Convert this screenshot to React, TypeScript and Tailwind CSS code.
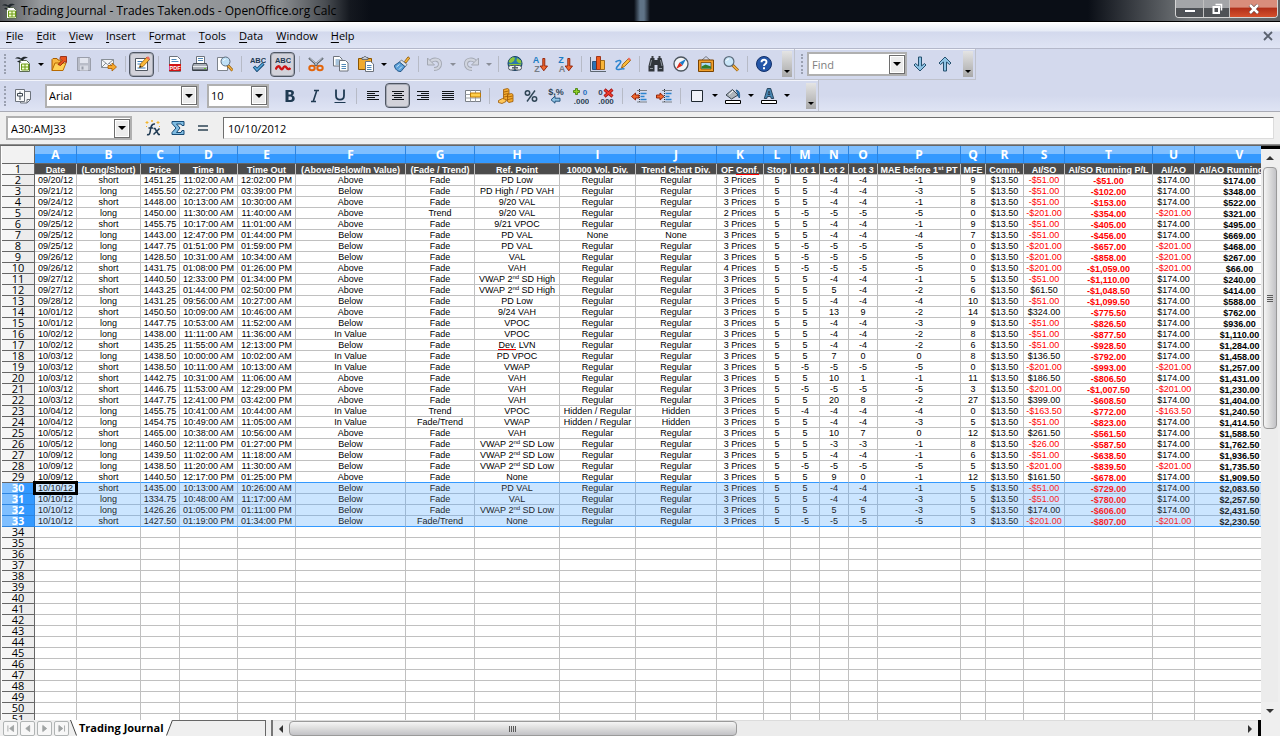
import type { ReactNode } from 'react'

type Column = {
    letter: string
    title: ReactNode
    width: number
}

const COLUMNS: Column[] = [
    { letter: 'A', title: 'Date', width: 42 },
    { letter: 'B', title: '(Long/Short)', width: 64 },
    { letter: 'C', title: 'Price', width: 39 },
    { letter: 'D', title: 'Time In', width: 58 },
    { letter: 'E', title: 'Time Out', width: 58 },
    { letter: 'F', title: '(Above/Below/In Value)', width: 110 },
    { letter: 'G', title: '(Fade / Trend)', width: 69 },
    { letter: 'H', title: 'Ref. Point', width: 85 },
    { letter: 'I', title: '10000 Vol. Div.', width: 76 },
    { letter: 'J', title: 'Trend Chart Div.', width: 81 },
    { letter: 'K', title: <>OF <Misspelt>Conf.</Misspelt></>, width: 47 },
    { letter: 'L', title: 'Stop', width: 27 },
    { letter: 'M', title: 'Lot 1', width: 29 },
    { letter: 'N', title: 'Lot 2', width: 29 },
    { letter: 'O', title: 'Lot 3', width: 29 },
    { letter: 'P', title: <>MAE before 1<sup className="text-[6px]">st</sup> PT</>, width: 83 },
    { letter: 'Q', title: 'MFE', width: 25 },
    { letter: 'R', title: 'Comm.', width: 38 },
    { letter: 'S', title: 'AI/SO', width: 41 },
    { letter: 'T', title: 'AI/SO Running P/L', width: 88 },
    { letter: 'U', title: 'AI/AO', width: 42 },
    { letter: 'V', title: 'AI/AO Running P/L', width: 90 },
]

const HEAD_WIDTH = 33
const TABLE_WIDTH = COLUMNS.reduce((sum, column) => sum + column.width, HEAD_WIDTH)
const LAST_ROW = 51

const TRADES = `
09/20/12|short|1451.25|11:02:00 AM|12:02:00 PM|Above|Fade|PD Low|Regular|Regular|3 Prices|5|5|-4|-4|-1|9|$13.50|-$51.00|-$51.00|$174.00|$174.00
09/21/12|long|1455.50|02:27:00 PM|03:39:00 PM|Below|Fade|PD High / PD VAH|Regular|Regular|3 Prices|5|5|-4|-4|-3|5|$13.50|-$51.00|-$102.00|$174.00|$348.00
09/24/12|short|1448.00|10:13:00 AM|10:30:00 AM|Above|Fade|9/20 VAL|Regular|Regular|3 Prices|5|5|-4|-4|-1|8|$13.50|-$51.00|-$153.00|$174.00|$522.00
09/24/12|long|1450.00|11:30:00 AM|11:40:00 AM|Above|Trend|9/20 VAL|Regular|Regular|2 Prices|5|-5|-5|-5|-5|0|$13.50|-$201.00|-$354.00|-$201.00|$321.00
09/25/12|short|1455.75|10:17:00 AM|11:01:00 AM|Above|Fade|9/21 VPOC|Regular|Regular|3 Prices|5|5|-4|-4|-1|9|$13.50|-$51.00|-$405.00|$174.00|$495.00
09/25/12|long|1443.00|12:47:00 PM|01:44:00 PM|Below|Fade|PD VAL|None|None|3 Prices|5|5|-4|-4|-4|7|$13.50|-$51.00|-$456.00|$174.00|$669.00
09/25/12|long|1447.75|01:51:00 PM|01:59:00 PM|Below|Fade|PD VAL|Regular|Regular|3 Prices|5|-5|-5|-5|-5|0|$13.50|-$201.00|-$657.00|-$201.00|$468.00
09/26/12|long|1428.50|10:31:00 AM|10:34:00 AM|Below|Fade|VAL|Regular|Regular|3 Prices|5|-5|-5|-5|-5|0|$13.50|-$201.00|-$858.00|-$201.00|$267.00
09/26/12|short|1431.75|01:08:00 PM|01:26:00 PM|Above|Fade|VAH|Regular|Regular|4 Prices|5|-5|-5|-5|-5|0|$13.50|-$201.00|-$1,059.00|-$201.00|$66.00
09/27/12|short|1440.50|12:33:00 PM|01:34:00 PM|Above|Fade|VWAP 2^nd^ SD High|Regular|Regular|3 Prices|5|5|-4|-4|-1|5|$13.50|-$51.00|-$1,110.00|$174.00|$240.00
09/27/12|short|1443.25|01:44:00 PM|02:50:00 PM|Above|Fade|VWAP 2^nd^ SD High|Regular|Regular|3 Prices|5|5|5|-4|-2|6|$13.50|$61.50|-$1,048.50|$174.00|$414.00
09/28/12|long|1431.25|09:56:00 AM|10:27:00 AM|Below|Fade|PD Low|Regular|Regular|3 Prices|5|5|-4|-4|-4|10|$13.50|-$51.00|-$1,099.50|$174.00|$588.00
10/01/12|short|1450.50|10:09:00 AM|10:46:00 AM|Above|Fade|9/24 VAH|Regular|Regular|3 Prices|5|5|13|9|-2|14|$13.50|$324.00|-$775.50|$174.00|$762.00
10/01/12|long|1447.75|10:53:00 AM|11:52:00 AM|Below|Fade|VPOC|Regular|Regular|3 Prices|5|5|-4|-4|-3|9|$13.50|-$51.00|-$826.50|$174.00|$936.00
10/02/12|long|1438.00|11:11:00 AM|11:36:00 AM|In Value|Fade|VPOC|Regular|Regular|3 Prices|5|5|-4|-4|-2|8|$13.50|-$51.00|-$877.50|$174.00|$1,110.00
10/02/12|short|1435.25|11:55:00 AM|12:13:00 PM|Below|Fade|~Dev.~ LVN|Regular|Regular|3 Prices|5|5|-4|-4|-2|6|$13.50|-$51.00|-$928.50|$174.00|$1,284.00
10/03/12|long|1438.50|10:00:00 AM|10:02:00 AM|In Value|Fade|PD VPOC|Regular|Regular|3 Prices|5|5|7|0|0|8|$13.50|$136.50|-$792.00|$174.00|$1,458.00
10/03/12|short|1438.50|10:11:00 AM|10:13:00 AM|In Value|Fade|VWAP|Regular|Regular|3 Prices|5|-5|-5|-5|-5|0|$13.50|-$201.00|-$993.00|-$201.00|$1,257.00
10/03/12|short|1442.75|10:31:00 AM|11:06:00 AM|Above|Fade|VAH|Regular|Regular|3 Prices|5|5|10|1|-1|11|$13.50|$186.50|-$806.50|$174.00|$1,431.00
10/03/12|short|1446.75|11:53:00 AM|12:29:00 PM|Above|Fade|VAH|Regular|Regular|3 Prices|5|-5|-5|-5|-5|3|$13.50|-$201.00|-$1,007.50|-$201.00|$1,230.00
10/03/12|short|1447.75|12:41:00 PM|03:42:00 PM|Above|Fade|VAH|Regular|Regular|3 Prices|5|5|20|8|-2|27|$13.50|$399.00|-$608.50|$174.00|$1,404.00
10/04/12|long|1455.75|10:41:00 AM|10:44:00 AM|In Value|Trend|VPOC|Hidden / Regular|Hidden|3 Prices|5|-4|-4|-4|-4|0|$13.50|-$163.50|-$772.00|-$163.50|$1,240.50
10/04/12|long|1454.75|10:49:00 AM|11:05:00 AM|In Value|Fade/Trend|VWAP|Hidden / Regular|Hidden|3 Prices|5|5|-4|-4|-3|5|$13.50|-$51.00|-$823.00|$174.00|$1,414.50
10/05/12|short|1465.00|10:38:00 AM|10:56:00 AM|Above|Fade|VAH|Regular|Regular|3 Prices|5|5|10|7|0|12|$13.50|$261.50|-$561.50|$174.00|$1,588.50
10/05/12|long|1460.50|12:11:00 PM|01:27:00 PM|Below|Fade|VWAP 2^nd^ SD Low|Regular|Regular|3 Prices|5|5|-3|-3|-1|8|$13.50|-$26.00|-$587.50|$174.00|$1,762.50
10/09/12|long|1439.50|11:02:00 AM|11:18:00 AM|Below|Fade|VWAP 2^nd^ SD Low|Regular|Regular|3 Prices|5|5|-4|-4|-1|6|$13.50|-$51.00|-$638.50|$174.00|$1,936.50
10/09/12|long|1438.50|11:20:00 AM|11:30:00 AM|Below|Fade|VWAP 2^nd^ SD Low|Regular|Regular|3 Prices|5|-5|-5|-5|-5|5|$13.50|-$201.00|-$839.50|-$201.00|$1,735.50
10/09/12|short|1440.50|12:17:00 PM|01:25:00 PM|Above|Fade|None|Regular|Regular|3 Prices|5|5|9|0|-1|12|$13.50|$161.50|-$678.00|$174.00|$1,909.50
10/10/12|short|1435.00|10:13:00 AM|10:26:00 AM|Below|Fade|PD VAL|Regular|Regular|3 Prices|5|5|-4|-4|-1|5|$13.50|-$51.00|-$729.00|$174.00|$2,083.50
10/10/12|long|1334.75|10:48:00 AM|11:17:00 AM|Below|Fade|VAL|Regular|Regular|3 Prices|5|5|-4|-4|-3|5|$13.50|-$51.00|-$780.00|$174.00|$2,257.50
10/10/12|long|1426.26|01:05:00 PM|01:11:00 PM|Below|Fade|VWAP 2^nd^ SD Low|Regular|Regular|3 Prices|5|5|5|5|-3|5|$13.50|$174.00|-$606.00|$174.00|$2,431.50
10/10/12|short|1427.50|01:19:00 PM|01:34:00 PM|Below|Fade/Trend|None|Regular|Regular|3 Prices|5|-5|-5|-5|-5|3|$13.50|-$201.00|-$807.00|-$201.00|$2,230.50
`
    .trim()
    .split('\n')
    .map((line) => line.split('|'))

function Misspelt({ children }: { children: ReactNode }) {
    return <span className="shadow-[inset_0_-1px_0_#ff0000]">{children}</span>
}

// ^x^ is superscript, ~x~ is flagged by the spell checker
const renderValue = (value: string): ReactNode => {
    if (value.includes('^')) {
        const [before, sup, after] = value.split('^')
        return <>{before}<sup className="text-[6px]">{sup}</sup>{after}</>
    }
    if (value.includes('~')) {
        const [, word, after] = value.split('~')
        return <><Misspelt>{word}</Misspelt>{after}</>
    }
    return value
}

/* ---------- icons ---------- */

function Svg({ children }: { children: ReactNode }) {
    return <svg viewBox="0 0 16 16" className="size-4 shrink-0" fill="none" aria-hidden="true">{children}</svg>
}

const CalcIcon = () => (
    <Svg>
        <path d="M4.5 4.5h7l3 3v8h-10z" fill="#fff" stroke="#5b6b52" />
        <path d="M0 2.5C2 .5 4.500 1 6 2.500 8 0 11 .5 13 2c-2.500-.3-4 .5-5.500 3C5.500 3 3 2.500 0 2.500z" fill="#20272c" />
        <path d="M2 5.500c1.500-1.200 3-1 4.500 1C5 6.500 3.500 6.500 2 5.500z" fill="#20272c" />
        <path d="M6.500 8h7v6h-7z" fill="#f3ffd0" stroke="#6c9a14" />
        <path d="M10 8v6M6.500 11h7" stroke="#6c9a14" />
    </Svg>
)

const OpenIcon = () => (
    <Svg>
        <path d="M1 14.5v-11l1-1h4l1 1.5h3v3" fill="#f8b840" stroke="#a85b00" />
        <path d="M1 14.5L4 7h11l-3 7.500z" fill="#ffd257" stroke="#b86a00" />
        <path d="M7 8.500l4-4-2-2L9.500.5h6v6l-2-1-4 4z" fill="#e8541e" stroke="#8e1c00" strokeWidth=".8" />
    </Svg>
)

const SaveIcon = () => (
    <Svg>
        <path d="M1.500 1.500h12l1 1v12h-13z" fill="#b9bdc8" stroke="#9a9eaa" />
        <path d="M4 2h8v5H4z" fill="#e2e5ee" />
        <path d="M4 9.500h8v5H4z" fill="#d8dbe4" />
        <path d="M5.500 10.500h2v3h-2z" fill="#9a9eaa" />
    </Svg>
)

const MailIcon = () => (
    <Svg>
        <path d="M.5 3.500h12v8H.5z" fill="#f5f6f8" stroke="#888f96" />
        <path d="M.5 3.500l6 5 6-5M.5 11.500L5 7M12.500 11.500L8 7" stroke="#888f96" />
        <path d="M7 9.500h4V7l4.500 4-4.500 4v-2.500H7z" fill="#f8a92c" stroke="#a85b00" strokeWidth=".8" />
    </Svg>
)

const EditIcon = () => (
    <Svg>
        <path d="M1.500 2.500h12v12h-12z" fill="#fff" stroke="#4f5660" />
        <path d="M3.500 5.500h5M3.500 8h3M3.500 12h8" stroke="#3b7ab5" />
        <path d="M5.500 11.500l1-3.500L13 1l2.500 2.500-6.500 7z" fill="#fbb838" stroke="#8c5600" strokeWidth=".8" />
        <path d="M12 2l2-1.800 2 2L14.500 4z" fill="#ec6a5c" />
        <path d="M5.500 11.500l.6-2 1.500 1.400z" fill="#222" />
    </Svg>
)

const PdfIcon = () => (
    <Svg>
        <path d="M2.500.5h8l3 3v12h-11z" fill="#fff" stroke="#6d737c" />
        <path d="M4.500 3.500h5M4.500 5.500h7" stroke="#5088b8" />
        <path d="M2 8h12v7H2z" fill="#d21313" />
        <text x="8" y="13.500" textAnchor="middle" fontSize="5.500" fontWeight="700" fill="#fff" fontFamily="Liberation Sans, sans-serif">PDF</text>
    </Svg>
)

const PrintIcon = () => (
    <Svg>
        <path d="M4.500.5h8v7h-8z" fill="#fff" stroke="#6d737c" />
        <path d="M6 2.500h5M6 4.500h5" stroke="#5088b8" />
        <path d="M1.500 7.500h13l1 3v4H.5v-4z" fill="#aab0b8" stroke="#454c55" />
        <path d="M1 10.500h14" stroke="#e9ecef" />
        <path d="M1 14h14" stroke="#2d333a" />
        <path d="M12 12.500h2" stroke="#66c52c" />
    </Svg>
)

const PreviewIcon = () => (
    <Svg>
        <path d="M.5 1.500h8l2 2v11H.5z" fill="#fff" stroke="#7d838c" />
        <path d="M10.500 9l5 5.500" stroke="#8c5600" strokeWidth="2.800" />
        <path d="M11 9.500l4.500 5" stroke="#f3b044" strokeWidth="1.500" />
        <circle cx="8.500" cy="5.500" r="4.500" fill="#bfe0f6" stroke="#5c6c7c" />
        <path d="M6.500 5c.3-1.200 1-1.600 2-1.700" stroke="#fff" />
    </Svg>
)

const AbcText = () => (
    <text x="8" y="6.500" textAnchor="middle" fontSize="7.500" fontWeight="700" fill="#1f3a52" fontFamily="Liberation Sans, sans-serif">ABC</text>
)

const SpellIcon = () => (
    <Svg>
        <AbcText />
        <path d="M4 10.500l3 3.500 6.500-6.500" stroke="#174a74" strokeWidth="3.200" />
        <path d="M4.500 11l2.500 2.800 6-6" stroke="#58a9dd" strokeWidth="1.500" />
    </Svg>
)

const AutoSpellIcon = () => (
    <Svg>
        <AbcText />
        <path d="M.5 13.500c2-4 3.500-4 4.800-1.500 1.200 1.800 2 1.500 2.700.2 1.200-2.400 2.500-2.400 3.500-.5 1 1.800 2.500 2 4 .3" stroke="#cc1414" strokeWidth="2.400" />
    </Svg>
)

const CutIcon = () => (
    <Svg>
        <path d="M1 2l9 8M15 2l-9 8" stroke="#59626c" strokeWidth="2.200" />
        <path d="M1.500 2l8 7M14.500 2l-8 7" stroke="#d9dee3" strokeWidth=".8" />
        <ellipse cx="4" cy="12" rx="2.700" ry="2.300" stroke="#e2650b" strokeWidth="2" />
        <ellipse cx="12" cy="12" rx="2.700" ry="2.300" stroke="#e2650b" strokeWidth="2" />
    </Svg>
)

const CopyIcon = () => (
    <Svg>
        <path d="M.5.5h6L9 3v7H.5z" fill="#fff" stroke="#6d737c" />
        <path d="M2.500 4h5M2.500 6h5M2.500 8h5" stroke="#5088b8" />
        <path d="M6.500 4.500h6L15 7v8H6.500z" fill="#fff" stroke="#6d737c" />
        <path d="M8.500 8.500h4.500M8.500 10.500h4.500M8.500 12.500h4.500" stroke="#5088b8" />
    </Svg>
)

const PasteIcon = () => (
    <Svg>
        <path d="M.5 2.500h13v11H.5z" fill="#f0aa2f" stroke="#8c5600" />
        <path d="M4 3.500v-2h1.500l.8-1h1.400l.8 1H10v2z" fill="#c5cad0" stroke="#555c64" strokeWidth=".8" />
        <path d="M7.500 5.500h5l3 2.500v7.500h-8z" fill="#fff" stroke="#6d737c" />
        <path d="M9 9.500h4.500M9 11.500h4.500M9 13.500h4.500" stroke="#5088b8" />
    </Svg>
)

const BrushIcon = () => (
    <Svg>
        <path d="M10.500 5.500L14 .8 15.800 2.200 12 7z" fill="#f5b63c" stroke="#8c5600" strokeWidth=".8" />
        <path d="M7.500 4l5.500 4.500-2 2.500L5 6.500z" fill="#dfe4ea" stroke="#5b6570" strokeWidth=".8" />
        <path d="M5.500 6l5.500 4.500-4 5C4 16 1 13.500.3 9.500z" fill="#5a9fd8" stroke="#1d4f80" strokeWidth=".9" />
        <path d="M5.500 8.500L2.500 11M8 10.500L5 13.500" stroke="#cbe6fa" />
    </Svg>
)

const UndoIcon = () => (
    <Svg>
        <path d="M3 6.500C6 2 13 3 13 8c0 3-2.500 5-6 5" stroke="#a3a8b3" strokeWidth="4" />
        <path d="M3 6.500C6 2 13 3 13 8c0 3-2.500 5-6 5" stroke="#d0d4de" strokeWidth="2.200" />
        <path d="M.5 2v7h7z" fill="#d0d4de" stroke="#a3a8b3" />
    </Svg>
)

const RedoIcon = () => (
    <Svg>
        <path d="M13 6.500C10 2 3 3 3 8c0 3 2.500 5 6 5" stroke="#a3a8b3" strokeWidth="4" />
        <path d="M13 6.500C10 2 3 3 3 8c0 3 2.500 5 6 5" stroke="#d0d4de" strokeWidth="2.200" />
        <path d="M15.500 2v7h-7z" fill="#d0d4de" stroke="#a3a8b3" />
    </Svg>
)

const GlobeIcon = () => (
    <Svg>
        <circle cx="8" cy="7.500" r="7" fill="#2c79ab" stroke="#174060" />
        <path d="M3 3c2-2 4-2 5-1L7 5 4 7 1.500 6zM10 2l4 2.500.5 3-3-.5-2-2z" fill="#8cc63a" />
        <path d="M2 8.500h12" stroke="#8cc63a" />
        <rect x="1.500" y="9.500" width="7" height="4.500" rx="2.200" fill="#eef1f3" stroke="#4c555e" />
        <rect x="7.500" y="9.500" width="7" height="4.500" rx="2.200" fill="#eef1f3" stroke="#4c555e" />
        <path d="M5 11.800h6" stroke="#4c555e" strokeWidth="1.400" />
    </Svg>
)

const SortIcon = ({ first, last }: { first: string; last: string }) => (
    <Svg>
        <text x="4" y="7" textAnchor="middle" fontSize="9" fontWeight="700" fill="#1c7dc4" fontFamily="Liberation Sans, sans-serif">{first}</text>
        <text x="5" y="16" textAnchor="middle" fontSize="9" fontWeight="700" fill="#777d85" fontFamily="Liberation Sans, sans-serif">{last}</text>
        <path d="M10.800 2.500h2v7.500h2.700L11.800 14.800 8.200 10h2.600z" fill="#f0682e" stroke="#8e1c00" strokeWidth=".9" />
    </Svg>
)

const ChartIcon = () => (
    <Svg>
        <path d="M.5 1v14.500H16" stroke="#5c6670" />
        <path d="M2.500 5.500h4v8h-4z" fill="#2c72b4" stroke="#143f6b" strokeWidth=".8" />
        <path d="M6.500.5h4v13h-4z" fill="#ee5a1c" stroke="#8e1c00" strokeWidth=".8" />
        <path d="M10.500 4.500h4v9h-4z" fill="#f8b53a" stroke="#8c5600" strokeWidth=".8" />
    </Svg>
)

const DrawIcon = () => (
    <Svg>
        <path d="M.5 6c3-2 6-2 5 .5C4.500 9 .5 11 1.500 13c1.500 1.500 5-1 8 0" stroke="#2a84cf" strokeWidth="1.600" />
        <path d="M6.500 12l1-3.500 6-6 2 2-6 6z" fill="#fbb838" stroke="#8c5600" strokeWidth=".8" />
        <path d="M12.500 3L14 1.500l2 2L14.500 5z" fill="#ec6a5c" />
    </Svg>
)

const FindIcon = () => (
    <Svg>
        <path d="M2.500 2h4v2h3V2h4l2 8v5.500h-6V9h-3v6.500h-6V10z" fill="#30353b" />
        <path d="M3.500 1h2M10.500 1h2" stroke="#111" strokeWidth="1.500" />
        <path d="M3.500 4L2 10M12.500 4l1.500 6M2 12.500h3M11 12.500h3" stroke="#8c949c" />
    </Svg>
)

const CompassIcon = () => (
    <Svg>
        <circle cx="8" cy="8" r="7" fill="#f3f5f7" stroke="#4c555e" strokeWidth="1.300" />
        <path d="M13 3L9.500 9.500l-3-3z" fill="#1e7cc8" />
        <path d="M3 13l3.500-6.500 3 3z" fill="#e02a1a" />
    </Svg>
)

const GalleryIcon = () => (
    <Svg>
        <path d="M4 4L8 .5 12 4" stroke="#6b6f75" strokeWidth=".9" />
        <path d="M.5 4h15v11.500H.5z" fill="#f0a02c" stroke="#7a4300" />
        <path d="M3 6.500h10V13H3z" fill="#a9dbf7" stroke="#7a4300" strokeWidth=".8" />
        <path d="M3.500 12.500v-2l4-2 5.500 2v2z" fill="#2f7d2a" />
    </Svg>
)

const ZoomIcon = () => (
    <Svg>
        <path d="M9.500 9l5.500 5.500" stroke="#8c5600" strokeWidth="3" />
        <path d="M10 9.500l4.800 4.800" stroke="#f3b044" strokeWidth="1.700" />
        <circle cx="6" cy="5.500" r="4.900" fill="#c9e6f8" stroke="#5c6c7c" strokeWidth="1.200" />
        <path d="M3.500 5c.3-1.300 1.200-2 2.500-2" stroke="#fff" />
    </Svg>
)

const HelpIcon = () => (
    <Svg>
        <circle cx="8" cy="8" r="7.500" fill="#2456a8" stroke="#12306a" />
        <path d="M5.500 6.200C5.500 3 10.500 3 10.500 6c0 2-2.500 2-2.500 4" stroke="#fff" strokeWidth="1.900" />
        <path d="M7 11.300h2v2H7z" fill="#fff" />
    </Svg>
)

const ArrowIcon = ({ up = false }: { up?: boolean }) => (
    <Svg>
        <path
            d={up ? 'M8 1l6 6-1.500 1.500-3-2.500v9h-3V6l-3 2.500L2 7z' : 'M8 15l6-6-1.500-1.500-3 2.500V1h-3v9l-3-2.500L2 9z'}
            fill="#8fc3e4"
            stroke="#24506e"
        />
    </Svg>
)

const StylesIcon = () => (
    <Svg>
        <path d="M5.500 3.500h10v8L12 15H5.500z" fill="#f4f5f7" stroke="#6d737c" />
        <path d="M12 15v-3.500h3.500" stroke="#6d737c" />
        <path d="M.5 1.500h9v12h-9z" fill="#fafbfc" stroke="#6d737c" />
        <path d="M5 3.500v2M5 8v4M2.500 5.500h5V8h-5z" stroke="#3c4650" />
    </Svg>
)

const BoldIcon = () => (
    <Svg>
        <path d="M3.500 2h5c4 0 4.500 4 1.800 5.300C14 8.500 13.500 14 9 14H3.500zM6.500 4v2.500H8C9.800 6.500 9.800 4 8 4zM6.500 8.500V12h2c2 0 2-3.500 0-3.500z" fill="#1f3a52" fillRule="evenodd" />
    </Svg>
)

const ItalicIcon = () => (
    <Svg><path d="M7 2.500h5M4 13.500h5M9.800 2.500L6.200 13.500" stroke="#1f3a52" strokeWidth="1.600" /></Svg>
)

const UnderlineIcon = () => (
    <Svg>
        <path d="M4 1.500v6c0 5.500 8 5.500 8 0v-6" stroke="#1f3a52" strokeWidth="1.800" />
        <path d="M2.500 14.500h11" stroke="#1f3a52" />
    </Svg>
)

const LinesIcon = ({ d }: { d: string }) => (
    <Svg><path d={d} stroke="#101418" /></Svg>
)

const MergeIcon = () => (
    <Svg>
        <path d="M.5 2.500h15v11H.5z" fill="#fff" stroke="#7b8087" />
        <path d="M.5 6.500h15M.5 10h15M5.500 2.500v11M10.500 2.500v11" stroke="#9aa0a7" />
        <path d="M5.500 5h10v4h-10z" fill="#ffcf4a" stroke="#c07a00" />
    </Svg>
)

const CurrencyIcon = () => (
    <Svg>
        <path d="M5.500 1.500l4-1 1.500 1v10l-4 1-1.500-1z" fill="#f5ac30" stroke="#9a5600" strokeWidth=".8" />
        <path d="M9.500 6.500l4-1 1.500 1v7l-4 1-1.500-1z" fill="#f5ac30" stroke="#9a5600" strokeWidth=".8" />
        <path d="M.5 12.500l4-2 3.500 1v2l-4 2-3.500-1z" fill="#ffc95c" stroke="#9a5600" strokeWidth=".8" />
        <path d="M6 4l4.500-1M6 6.500l4.500-1M6 9l4.500-1M10 9l4.500-1M10 11.500l4.500-1" stroke="#9a5600" strokeWidth=".8" />
    </Svg>
)

const PercentIcon = () => (
    <Svg>
        <circle cx="4.500" cy="5" r="2.200" stroke="#2f4556" strokeWidth="1.500" />
        <circle cx="11.500" cy="11" r="2.200" stroke="#2f4556" strokeWidth="1.500" />
        <path d="M12 2.500L4 13.500" stroke="#2f4556" strokeWidth="1.400" />
    </Svg>
)

const StandardIcon = () => (
    <Svg>
        <text x="8" y="7" textAnchor="middle" fontSize="9" fontWeight="700" fill="#2f4556" fontFamily="Liberation Sans, sans-serif">$,%</text>
        <path d="M3 11.800l4-3.600v2h5v3H7v2z" fill="#8fc3e4" stroke="#174a74" strokeWidth=".9" />
    </Svg>
)

const AddDecimalIcon = () => (
    <Svg>
        <path d="M2.500.5h2v2h2v2h-2v2h-2v-2h-2v-2h2z" fill="#8fd128" stroke="#3c7a00" strokeWidth=".8" />
        <text x="12" y="7" textAnchor="middle" fontSize="8" fontWeight="700" fill="#2a6fc0" fontFamily="Liberation Sans, sans-serif">0</text>
        <text x="8.500" y="15.500" textAnchor="middle" fontSize="8" fontWeight="700" fill="#2f4556" fontFamily="Liberation Sans, sans-serif">.000</text>
    </Svg>
)

const DeleteDecimalIcon = () => (
    <Svg>
        <text x="2.500" y="7" textAnchor="middle" fontSize="8" fontWeight="700" fill="#2f4556" fontFamily="Liberation Sans, sans-serif">0</text>
        <text x="8" y="15.500" textAnchor="middle" fontSize="8" fontWeight="700" fill="#2f4556" fontFamily="Liberation Sans, sans-serif">.000</text>
        <path d="M6.500 1.500l8 7M14.500 1.500l-8 7" stroke="#9a0d0d" strokeWidth="3" />
        <path d="M6.800 1.800l7.400 6.400M14.200 1.800L6.800 8.200" stroke="#ee3b2c" strokeWidth="1.600" />
    </Svg>
)

const IndentIcon = ({ increase = false }: { increase?: boolean }) => (
    <Svg>
        <path d="M8.500 1v14" stroke="#30353b" strokeDasharray="1 1" />
        <path d="M6 2.500h10M6 14h10" stroke="#7b8087" />
        <path d="M9.500 5.500h6M9.500 8.500h4M9.500 11.500h6" stroke="#2a84cf" strokeWidth="1.600" />
        <path
            d={increase ? 'M8 8.500L4 5v2H.5v3H4v2z' : 'M.5 8.500L4.500 5v2H8v3H4.500v2z'}
            fill="#f0682e"
            stroke="#8e1c00"
            strokeWidth=".9"
        />
    </Svg>
)

const BorderIcon = () => (
    <Svg><path d="M2.500 2.500h11v11h-11z" fill="#f0f2f8" stroke="#1f2830" /></Svg>
)

const FillIcon = () => (
    <Svg>
        <path d="M1 7l6.500-5.500L13 7l-6.500 4z" fill="#aeb5bc" stroke="#3d4750" />
        <path d="M4 6.500L8 3" stroke="#fff" />
        <path d="M11 2c3 .5 4 2.500 3.500 8-1-1-2-2-1.500-4z" fill="#2a84cf" stroke="#174a74" strokeWidth=".8" />
        <path d="M.5 12.500h15v3H.5z" fill="#fff" stroke="#000" />
    </Svg>
)

const FontColorIcon = () => (
    <Svg>
        <path d="M6.300.5h3.400l3 10h-2.500l-.6-2H6.400l-.6 2H3.300zM7 6.500h2L8 3z" fill="#4888b4" fillRule="evenodd" stroke="#1f3a52" strokeWidth=".9" />
        <path d="M.5 12.500h15v3H.5z" fill="#fff" stroke="#000" />
    </Svg>
)

const FunctionIcon = () => (
    <Svg>
        <path d="M2 14.500c3 1 3-2 3.500-5S6.500 3.500 10 4M3.500 8H8" stroke="#1f3a52" strokeWidth="1.500" />
        <path d="M8.500 8.500H10l3.500 6H15M14.500 8.500l-6 6" stroke="#1f3a52" strokeWidth="1.500" />
        <path d="M2 1v3M.5 2.500h3M7 0v2M6 1h2M13 1v3M11.500 2.500h3M1 6.500h1M14 6.500h1" stroke="#f3b62c" />
    </Svg>
)

const SumIcon = () => (
    <Svg>
        <path d="M2 1.500h12v4h-2L11 4H6.500L10 8l-3.500 4.500H11l1-2h2v4H2v-2L6 8 2 3.500z" fill="#7fbce2" stroke="#174a74" />
    </Svg>
)

/* ---------- toolbar parts ---------- */

function Tool({ label, pressed = false, children }: { label: string; pressed?: boolean; children: ReactNode }) {
    return (
        <button
            type="button"
            aria-label={label}
            aria-pressed={pressed}
            className={[
                'flex h-[25px] w-[25px] shrink-0 items-center justify-center rounded-sm',
                pressed ? 'border border-[#4f5663] bg-[#d2d2da] shadow-[inset_0_0_0_1px_#a4a8b2]' : '',
            ].join(' ')}
        >
            {children}
        </button>
    )
}

const Triangle = ({ className = 'border-t-black' }: { className?: string }) => (
    <span className={`block size-0 border-x-[3px] border-t-[3px] border-x-transparent ${className}`} />
)

const More = ({ label, disabled = false }: { label: string; disabled?: boolean }) => (
    <button type="button" aria-label={label} disabled={disabled} className="flex h-[25px] w-[11px] shrink-0 items-center justify-center">
        <Triangle className={disabled ? 'border-t-[#8a8e98]' : 'border-t-black'} />
    </button>
)

const Separator = () => (
    <span className="flex w-2 shrink-0 justify-center"><span className="h-4 w-px bg-[#b6bac6]" /></span>
)

const Grip = () => (
    <span className="mx-1 h-5 shrink-0 border-l-2 border-dotted border-[#9aa0b0]" />
)

const Overflow = () => (
    <button type="button" aria-label="More toolbar controls" className="flex h-[26px] w-2.5 shrink-0 items-end justify-center bg-linear-to-b from-[#e4e4e4] to-[#a9a9a9] pb-1">
        <Triangle />
    </button>
)

const DropArrow = () => (
    <span className="pointer-events-none flex h-[19px] w-4 items-center justify-center border border-[#6e6e6e] bg-[#ececec] shadow-[inset_0_0_0_1px_#fff]">
        <span className="block size-0 border-x-4 border-t-4 border-x-transparent border-t-black" />
    </span>
)

function Dropdown({ label, value, className }: { label: string; value: string; className: string }) {
    return (
        <div className={`relative flex h-6 shrink-0 items-center border-2 border-[#b0b0b0] bg-white ${className}`}>
            <select aria-label={label} className="h-full w-full appearance-none bg-transparent pl-0.5 outline-none">
                <option>{value}</option>
            </select>
            <span className="pointer-events-none absolute right-0"><DropArrow /></span>
        </div>
    )
}

function ComboBox({ label, value, placeholder, className }: { label: string; value?: string; placeholder?: string; className: string }) {
    return (
        <div className={`flex h-6 shrink-0 items-center border-2 border-[#b0b0b0] bg-white ${className}`}>
            <input aria-label={label} defaultValue={value} placeholder={placeholder} className="h-full w-0 min-w-0 flex-1 pl-[3px] outline-none placeholder:text-[#808080]" />
            <button type="button" aria-label={`${label} list`}><DropArrow /></button>
        </div>
    )
}

/* ---------- window sections ---------- */

function TitleBar() {
    return (
        <header className="flex h-[22px] shrink-0 items-start justify-between border-b border-black bg-[linear-gradient(90deg,#55585c_0px,#96999c_40px,#9a9da0_150px,#8b8e91_280px,#4a4e53_325px,#14181f_350px,#0a0e16_370px,#0a0e16_634px,#5f7387_640px,#5f7387_644px,#0a0e16_650px,#0a0e16_85%,#75797c_93%,#5d6164_100%)]">
            <div className="flex h-5 items-center gap-[3px] pt-0.5 pl-0.5 text-xs text-black">
                <CalcIcon />
                <h1>Trading Journal - Trades Taken.ods - OpenOffice.org Calc</h1>
            </div>
            <div className="mr-0.5 flex h-[18px] overflow-hidden rounded-b border border-t-0 border-[#d5d5d5]">
                <button type="button" aria-label="Minimize" className="flex w-7 items-end justify-center border-r border-[#c0c0c0] bg-linear-to-b from-[#a3a5a8] from-50% to-[#4f5256] to-50% pb-1">
                    <span className="h-1 w-3 border border-[#4a4f57] bg-white" />
                </button>
                <button type="button" aria-label="Restore" className="flex w-[26px] items-center justify-center border-r border-[#c0c0c0] bg-linear-to-b from-[#a3a5a8] from-50% to-[#4f5256] to-50%">
                    <svg viewBox="0 0 12 12" className="size-3" fill="none">
                        <path d="M4.500 1.500h6v6" stroke="#fff" strokeWidth="1.500" />
                        <path d="M2.500 4H8v6H2.500z" stroke="#fff" strokeWidth="2" />
                    </svg>
                </button>
                <button type="button" aria-label="Close" className="flex w-[47px] items-center justify-center bg-linear-to-b from-[#d98d7c] from-40% via-[#b2301a] via-50% to-[#d5502c]">
                    <svg viewBox="0 0 12 12" className="size-3" fill="none">
                        <path d="M2 2l8 8M10 2l-8 8" stroke="#5b3a3a" strokeWidth="3.800" />
                        <path d="M2 2l8 8M10 2l-8 8" stroke="#fff" strokeWidth="2.500" />
                    </svg>
                </button>
            </div>
        </header>
    )
}

const MENUS: [string, string, string][] = [
    ['', 'F', 'ile'],
    ['', 'E', 'dit'],
    ['', 'V', 'iew'],
    ['', 'I', 'nsert'],
    ['F', 'o', 'rmat'],
    ['', 'T', 'ools'],
    ['', 'D', 'ata'],
    ['', 'W', 'indow'],
    ['', 'H', 'elp'],
]

function MenuBar() {
    return (
        <nav className="flex h-[27px] shrink-0 items-center border-b border-[#b4b8ca] bg-[linear-gradient(#fff_0px,#e6ebf6_9px,#d3d9ed_10px,#dfe4f4_26px)] pt-px pr-[7px] pl-1.5">
            <div className="flex gap-[13px]">
                {MENUS.map(([before, key, after]) => (
                    <button type="button" key={key + after}>
                        {before}<span className="underline underline-offset-2">{key}</span>{after}
                    </button>
                ))}
            </div>
            <button type="button" aria-label="Close document" className="ml-auto">
                <svg viewBox="0 0 10 10" className="size-2.5"><path d="M1 1l8 8M9 1L1 9" stroke="#59616e" strokeWidth="1.800" /></svg>
            </button>
        </nav>
    )
}

const ALIGN_LEFT = 'M2 3.500h12M2 5.500h8M2 7.500h12M2 9.500h8M2 11.500h12'
const ALIGN_CENTER = 'M2 3.500h12M4 5.500h8M2 7.500h12M4 9.500h8M2 11.500h12'
const ALIGN_RIGHT = 'M2 3.500h12M6 5.500h8M2 7.500h12M6 9.500h8M2 11.500h12'
const ALIGN_JUSTIFY = 'M2 3.500h12M2 5.500h12M2 7.500h12M2 9.500h12M2 11.500h12'

function Toolbars() {
    return (
        <div className="shrink-0 border-b border-[#a9abb5] bg-[linear-gradient(#d3d9ed_75%,#dfe4f4)]">
            <div className="flex h-[31px]">
                <div className="flex items-center border-r border-b border-[#bfc2cc] pr-0.5 shadow-[inset_0_1px_0_#f2f4fb]">
                    <Grip />
                    <Tool label="New"><CalcIcon /></Tool>
                    <More label="New document type" />
                    <Tool label="Open"><OpenIcon /></Tool>
                    <Tool label="Save"><SaveIcon /></Tool>
                    <Tool label="Document as E-mail"><MailIcon /></Tool>
                    <Separator />
                    <Tool label="Edit File" pressed><EditIcon /></Tool>
                    <Separator />
                    <Tool label="Export as PDF"><PdfIcon /></Tool>
                    <Tool label="Print"><PrintIcon /></Tool>
                    <Tool label="Page Preview"><PreviewIcon /></Tool>
                    <Separator />
                    <Tool label="Spellcheck"><SpellIcon /></Tool>
                    <Tool label="AutoSpellcheck" pressed><AutoSpellIcon /></Tool>
                    <Separator />
                    <Tool label="Cut"><CutIcon /></Tool>
                    <Tool label="Copy"><CopyIcon /></Tool>
                    <Tool label="Paste"><PasteIcon /></Tool>
                    <More label="Paste options" />
                    <Tool label="Format Paintbrush"><BrushIcon /></Tool>
                    <Separator />
                    <Tool label="Undo"><UndoIcon /></Tool>
                    <More label="Undo history" disabled />
                    <Tool label="Redo"><RedoIcon /></Tool>
                    <More label="Redo history" disabled />
                    <Separator />
                    <Tool label="Hyperlink"><GlobeIcon /></Tool>
                    <Tool label="Sort Ascending"><SortIcon first="A" last="Z" /></Tool>
                    <Tool label="Sort Descending"><SortIcon first="Z" last="A" /></Tool>
                    <Separator />
                    <Tool label="Chart"><ChartIcon /></Tool>
                    <Tool label="Show Draw Functions"><DrawIcon /></Tool>
                    <Separator />
                    <Tool label="Find and Replace"><FindIcon /></Tool>
                    <Tool label="Navigator"><CompassIcon /></Tool>
                    <Tool label="Gallery"><GalleryIcon /></Tool>
                    <Tool label="Zoom"><ZoomIcon /></Tool>
                    <Separator />
                    <Tool label="Help"><HelpIcon /></Tool>
                    <span className="w-1.5" />
                    <Overflow />
                </div>
                <div className="flex items-center border-r border-b border-[#bfc2cc] pr-0.5 pl-0.5 shadow-[inset_0_1px_0_#f2f4fb]">
                    <Grip />
                    <ComboBox label="Find" placeholder="Find" className="w-[100px]" />
                    <Tool label="Find Next"><ArrowIcon /></Tool>
                    <Tool label="Find Previous"><ArrowIcon up /></Tool>
                    <span className="w-1.5" />
                    <Overflow />
                </div>
            </div>
            <div className="flex h-[31px]">
                <div className="flex items-center border-r border-[#bfc2cc] pr-0.5 shadow-[inset_0_1px_0_#f2f4fb]">
                    <Grip />
                    <Tool label="Styles and Formatting"><StylesIcon /></Tool>
                    <Dropdown label="Font Name" value="Arial" className="ml-2.5 w-[154px]" />
                    <Dropdown label="Font Size" value="10" className="mx-2 w-[62px]" />
                    <Tool label="Bold"><BoldIcon /></Tool>
                    <Tool label="Italic"><ItalicIcon /></Tool>
                    <Tool label="Underline"><UnderlineIcon /></Tool>
                    <Separator />
                    <Tool label="Align Left"><LinesIcon d={ALIGN_LEFT} /></Tool>
                    <Tool label="Align Center" pressed><LinesIcon d={ALIGN_CENTER} /></Tool>
                    <Tool label="Align Right"><LinesIcon d={ALIGN_RIGHT} /></Tool>
                    <Tool label="Justified"><LinesIcon d={ALIGN_JUSTIFY} /></Tool>
                    <Tool label="Merge Cells"><MergeIcon /></Tool>
                    <Separator />
                    <Tool label="Currency"><CurrencyIcon /></Tool>
                    <Tool label="Percent"><PercentIcon /></Tool>
                    <Tool label="Standard"><StandardIcon /></Tool>
                    <Tool label="Add Decimal Place"><AddDecimalIcon /></Tool>
                    <Tool label="Delete Decimal Place"><DeleteDecimalIcon /></Tool>
                    <Separator />
                    <Tool label="Decrease Indent"><IndentIcon /></Tool>
                    <Tool label="Increase Indent"><IndentIcon increase /></Tool>
                    <Separator />
                    <Tool label="Borders"><BorderIcon /></Tool>
                    <More label="Border styles" />
                    <Tool label="Background Color"><FillIcon /></Tool>
                    <More label="Background colors" />
                    <Tool label="Font Color"><FontColorIcon /></Tool>
                    <More label="Font colors" />
                    <span className="w-3.5" />
                    <Overflow />
                </div>
            </div>
        </div>
    )
}

function FormulaBar() {
    return (
        <div className="flex h-[33px] shrink-0 items-center border-b border-[#8e8e8e] bg-[#efefef] px-1.5">
            <ComboBox label="Name Box" value="A30:AMJ33" className="w-[126px]" />
            <span className="w-2" />
            <Tool label="Function Wizard"><FunctionIcon /></Tool>
            <Tool label="Sum"><SumIcon /></Tool>
            <Tool label="Function"><Svg><path d="M3 6h10M3 10h10" stroke="#2f4556" strokeWidth="1.600" /></Svg></Tool>
            <input
                aria-label="Input line"
                defaultValue="10/10/2012"
                className="ml-2 h-[22px] min-w-0 flex-1 border border-[#dcdcdc] border-t-[#6e6e6e] border-l-[#6e6e6e] bg-white pl-1 outline-none"
            />
        </div>
    )
}

const isSelected = (row: number) => row >= 30 && row <= 33

function RowHeader({ row }: { row: number }) {
    return (
        <th
            scope="row"
            className={[
                "border-r border-b p-0 font-['Open_Sans','Noto_Sans',sans-serif] text-[11px] leading-[10px]",
                isSelected(row)
                    ? 'border-[#2c84e0] bg-linear-to-r from-[#7fbfff] from-50% to-[#3399ff] to-50% font-bold text-white'
                    : 'border-[#666] bg-linear-to-r from-[#f6f6f6] from-50% to-[#ececec] to-50% font-normal',
            ].join(' ')}
        >
            {row}
        </th>
    )
}

const isBalance = (index: number) => index === 19 || index === 21

function Cell({ row, index }: { row: number; index: number }) {
    const value = TRADES[row - 2]?.[index] ?? ''
    const selected = isSelected(row)
    const edge = row === 29 || row === 33
    const active = row === 30 && index === 0

    return (
        <td
            className={[
                'relative border-r border-b p-0',
                selected ? 'border-r-[#9db8d4] bg-[#cbe5ff]' : 'border-r-[#c0c0c0]',
                edge ? 'border-b-[#3399ff]' : selected ? 'border-b-[#9db8d4]' : 'border-b-[#c0c0c0]',
                value.startsWith('-$') ? 'text-[#ff0000]' : 'text-black',
            ].join(' ')}
        >
            <div
                className={[
                    'h-2.5',
                    isBalance(index) ? 'leading-3 font-bold' : '',
                    selected ? 'opacity-85' : '',
                ].join(' ')}
            >
                {renderValue(value)}
            </div>
            {active && <span className="absolute -inset-x-0.5 -inset-y-0.5 z-10 border-3 border-black" />}
        </td>
    )
}

function Sheet() {
    const rows = Array.from({ length: LAST_ROW - 1 }, (_, index) => index + 2)

    return (
        <div className="flex min-h-0 flex-1 border-t border-[#666] bg-[#efefef]">
            <div className="min-w-0 flex-1 overflow-hidden border-l border-[#8e8e8e] bg-white pl-px">
                <table
                    className="table-fixed border-separate border-spacing-0 text-center font-['Liberation_Sans',Arial,sans-serif] text-[9px] leading-[10px] whitespace-nowrap"
                    style={{ width: TABLE_WIDTH }}
                >
                    <colgroup>
                        <col style={{ width: HEAD_WIDTH }} />
                        {COLUMNS.map((column) => <col key={column.letter} style={{ width: column.width }} />)}
                    </colgroup>
                    <thead>
                        <tr>
                            <td aria-label="Select all" className="border-r border-b border-[#666] bg-[#f2f2f2] p-0" />
                            {COLUMNS.map((column) => (
                                <th
                                    key={column.letter}
                                    scope="col"
                                    className="h-[18px] border-r border-b border-[#2c84e0] border-b-[#666] bg-linear-to-b from-[#7fbfff] from-50% to-[#3399ff] to-50% p-0 font-['Open_Sans','Noto_Sans',sans-serif] text-xs leading-4 font-bold text-white"
                                >
                                    {column.letter}
                                </th>
                            ))}
                        </tr>
                    </thead>
                    <tbody>
                        <tr>
                            <RowHeader row={1} />
                            {COLUMNS.map((column) => (
                                <td key={column.letter} className="border-r border-b border-[#c0c0c0] bg-[#4c4c4c] p-0 font-bold text-white">
                                    <div className="flex h-2.5 justify-center leading-3"><span>{column.title}</span></div>
                                </td>
                            ))}
                        </tr>
                        {rows.map((row) => (
                            <tr key={row}>
                                <RowHeader row={row} />
                                {COLUMNS.map((column, index) => <Cell key={column.letter} row={row} index={index} />)}
                            </tr>
                        ))}
                    </tbody>
                </table>
            </div>
            <div className="flex w-[19px] shrink-0 flex-col items-center border-t-3 border-black pr-0.5">
                <button type="button" aria-label="Scroll up" className="flex h-[18px] shrink-0 items-center justify-center">
                    <span className="block size-0 border-x-4 border-b-4 border-x-transparent border-b-[#333]" />
                </button>
                <div className="flex min-h-0 w-full flex-1 flex-col items-center bg-[#ececec]">
                    <div className="flex h-[49%] w-3.5 flex-col items-center justify-center gap-px rounded-sm border border-[#9a9a9a] bg-linear-to-r from-[#f5f5f5] via-[#dcdcdc] to-[#c2c2c6]">
                        {[0, 1, 2, 3].map((line) => <span key={line} className="h-px w-1.5 bg-[#5a5a5a]" />)}
                    </div>
                </div>
                <button type="button" aria-label="Scroll down" className="flex h-[18px] shrink-0 items-center justify-center">
                    <span className="block size-0 border-x-4 border-t-4 border-x-transparent border-t-[#333]" />
                </button>
            </div>
        </div>
    )
}

const TAB_NAV: [string, string][] = [
    ['First sheet', 'M4.500 4v7M11 4v7L6.500 7.500z'],
    ['Previous sheet', 'M10 4v7L5.500 7.500z'],
    ['Next sheet', 'M5.500 4v7L10 7.500z'],
    ['Last sheet', 'M4.500 4v7L9 7.500zM11 4v7'],
]

function BottomBar() {
    return (
        <footer className="flex h-4 shrink-0 items-stretch overflow-hidden bg-[#efefef] pl-[3px]">
            <div className="flex gap-0.5 pt-px">
                {TAB_NAV.map(([label, d]) => (
                    <button type="button" key={label} aria-label={label} className="size-[15px] rounded-xs border border-[#b0b4b4] bg-[#f7f7f7]">
                        <svg viewBox="0 0 15 15" className="size-[13px]"><path d={d} fill="#a0a4a4" stroke="#a0a4a4" /></svg>
                    </button>
                ))}
            </div>
            <div className="flex pl-px">
                <svg viewBox="0 0 8 16" className="h-4 w-2"><path d="M0 0h8v16H6.500z" fill="#fff" /><path d="M.5 0l6 15.500" stroke="#444" /></svg>
                <button type="button" className="bg-white px-px text-[11px] leading-4 font-bold">Trading Journal</button>
                <svg viewBox="0 0 8 16" className="h-4 w-2"><path d="M0 0h8L1.500 16H0z" fill="#fff" /><path d="M7.500 0l-6 15.500" stroke="#444" /></svg>
            </div>
            <div className="w-[93px] border-t border-r border-[#666]" />
            <div className="ml-1 w-[3px] border-r-2 border-[#777]" />
            <div className="flex min-w-0 flex-1 items-center border-t border-[#dcdcdc] bg-[#ececec]">
                <button type="button" aria-label="Scroll left" className="flex w-4 shrink-0 justify-center">
                    <span className="block size-0 border-y-4 border-r-4 border-y-transparent border-r-[#333]" />
                </button>
                <div className="flex h-full min-w-0 flex-1">
                    <div className="flex w-[47%] items-center justify-center gap-px rounded-sm border border-[#9a9a9a] bg-linear-to-b from-[#f5f5f5] via-[#dcdcdc] to-[#c2c2c6]">
                        {[0, 1, 2, 3].map((line) => <span key={line} className="h-1.5 w-px bg-[#5a5a5a]" />)}
                    </div>
                </div>
                <button type="button" aria-label="Scroll right" className="flex w-4 shrink-0 justify-center">
                    <span className="block size-0 border-y-4 border-l-4 border-y-transparent border-l-[#333]" />
                </button>
            </div>
            <div className="w-[3px] bg-black" />
            <div className="w-[19px]" />
        </footer>
    )
}

export default function App() {
    return (
        <div className="flex h-screen flex-col overflow-hidden bg-[#efefef] font-['Open_Sans','Noto_Sans',sans-serif] text-[11px] leading-4 text-black">
            <TitleBar />
            <MenuBar />
            <Toolbars />
            <FormulaBar />
            <Sheet />
            <BottomBar />
        </div>
    )
}
